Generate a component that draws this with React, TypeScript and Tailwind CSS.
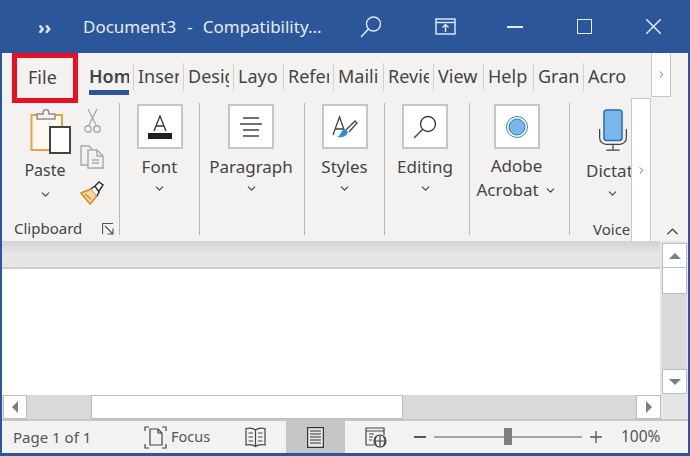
import { ChevronDown, ChevronRight, ChevronUp } from 'lucide-react'

const tabs = ['Inser', 'Desig', 'Layo', 'Refer', 'Maili', 'Revie', 'View', 'Help', 'Gran', 'Acro']

function Caret({ className = '' }: { className?: string }) {
  return <ChevronDown size={13} strokeWidth={2} className={`text-[#444] ${className}`} />
}

function IconBox({ children }: { children: React.ReactNode }) {
  return (
    <div className="flex h-[45px] w-[46px] items-center justify-center border-2 border-[#c6c6c6] bg-white">
      {children}
    </div>
  )
}

function BigGroup({ width, label, children }: { width: string; label: string; children: React.ReactNode }) {
  return (
    <div className={`flex h-[132px] flex-col items-center border-r border-[#b9b9b9] pt-px ${width}`}>
      <IconBox>{children}</IconBox>
      <div className="mt-[5px] text-[17px] leading-[25px]">{label}</div>
      <Caret className="mt-[3px]" />
    </div>
  )
}

function ScrollButton({ dir, className = '' }: { dir: 'up' | 'down' | 'left' | 'right'; className?: string }) {
  const points = { up: '0,9 6,3 12,9', down: '0,3 6,9 12,3', left: '9,0 3,6 9,12', right: '3,0 9,6 3,12' }[dir]
  return (
    <div className={`flex shrink-0 items-center justify-center border border-[#bdbdbd] bg-white ${className}`}>
      <svg width="12" height="12" viewBox="0 0 12 12">
        <polygon points={points} fill="#7d7d7d" />
      </svg>
    </div>
  )
}

export default function App() {
  return (
    <div className="relative flex h-[456px] w-[690px] flex-col overflow-hidden bg-[#2b579a] px-[2px] pb-[3px] font-['Noto_Sans',sans-serif] text-[#444]">
      {/* Title bar */}
      <div className="-mx-[2px] flex h-[53px] shrink-0 items-center text-[#e4ebf5]">
        <div className="ml-[38px] w-[45px] text-[18px] font-bold leading-none">››</div>
        <div className="w-[270px] whitespace-nowrap text-[17px]">
          Document3
          <span className="ml-[11px]">-</span>
          <span className="ml-[10px]">Compatibility...</span>
        </div>
        <svg className="ml-[7px]" width="22" height="24" viewBox="0 0 22 24" fill="none" stroke="currentColor" strokeWidth="1.4">
          <circle cx="13.5" cy="9" r="7" />
          <path d="M8.5 14 1 22" />
        </svg>
        <svg className="ml-[53px]" width="21" height="17" viewBox="0 0 21 17" fill="none" stroke="currentColor" strokeWidth="1.4">
          <rect x="1" y="1" width="19" height="15" />
          <path d="M1 4.5h19" />
          <path d="M10.5 14V7M7.5 9.5l3-3 3 3" />
        </svg>
        <div className="ml-[51px] h-[2px] w-[16px] bg-current" />
        <div className="ml-[54px] h-[15px] w-[15px] border-[1.5px] border-current" />
        <svg className="ml-[54px]" width="15" height="15" viewBox="0 0 15 15" stroke="currentColor" strokeWidth="1.5">
          <path d="M0 0l15 15M15 0 0 15" />
        </svg>
      </div>

      {/* Ribbon */}
      <div className="relative flex h-[188px] shrink-0 flex-col bg-[#f3f2f1]">
        <div className="flex h-[45px] shrink-0 items-center pl-[12px] pt-[3px] text-[18px]">
          <div className="w-[70px] pl-[14px]">File</div>
          <div className="h-[28px] w-[49px] pl-[5px] pr-[4px]">
            <div className="h-full overflow-hidden font-semibold leading-[27px]">Home</div>
          </div>
          {tabs.map((tab) => (
            <div key={tab} className="h-[28px] w-[50px] shrink-0 border-l border-[#d0d0d0] pl-[4px] pr-[4px]">
              <div className="h-full overflow-hidden whitespace-nowrap leading-[27px]">{tab}</div>
            </div>
          ))}
        </div>

        <div className="flex flex-1 items-start overflow-hidden pt-[5px] text-[#444]">
          {/* Clipboard */}
          <div className="relative flex h-[132px] w-[118px] shrink-0 flex-col border-r border-[#b9b9b9]">
            <div className="flex h-[104px] pt-[6px]">
              <div className="ml-[18px] flex w-[50px] flex-col items-center">
                <svg className="ml-[11px]" width="42" height="46" viewBox="0 0 42 46" fill="none">
                  <path d="M7 6H1.500v35H20V20h12V6h-6" fill="#fdf8f0" stroke="#e8a33d" strokeWidth="2" />
                  <path d="M7 10V5h6c0-6 6-6 6 0h6v5z" fill="#f3f2f1" stroke="#8c8c8c" strokeWidth="1.5" />
                  <rect x="20" y="18" width="20" height="26" fill="#fff" stroke="#444" strokeWidth="2" />
                </svg>
                <div className="mt-[3px] text-[16px] leading-[25px]">Paste</div>
                <Caret className="mt-[5px]" />
              </div>
              <div className="ml-[10px] flex flex-col items-center gap-[12px]">
                <svg width="17" height="24" viewBox="0 0 17 24" fill="none" stroke="#a9a9a9" strokeWidth="1.4">
                  <path d="M4 0l8 16M13 0 5 16" />
                  <circle cx="4" cy="20" r="3.2" />
                  <circle cx="13" cy="20" r="3.2" />
                </svg>
                <svg width="25" height="24" viewBox="0 0 25 24" fill="none" stroke="#a9a9a9" strokeWidth="1.4">
                  <path d="M8 20H1V1h8l3 3" />
                  <path d="M8 5h9l6 6v12H8zM17 5v6h6M12 15h7M12 18h7" fill="#f3f2f1" />
                </svg>
                <svg width="25" height="24" viewBox="0 0 25 24" fill="none">
                  <path d="M1 12 11 8l6 7-7 8z" fill="#f6d8aa" stroke="#dd8a1e" strokeWidth="1.6" />
                  <path d="M5 13l6 5" stroke="#dd8a1e" strokeWidth="1.5" />
                  <path d="M11 8l4-3 4 6-2 4M15 5l4-4 4 3-4 6" stroke="#333" strokeWidth="1.5" fill="#fff" />
                </svg>
              </div>
            </div>
            <div className="ml-[12px] mt-[13px] text-[15px] leading-[20px]">Clipboard</div>
            <svg className="absolute bottom-0 right-[5px]" width="12" height="12" viewBox="0 0 12 12" fill="none" stroke="#555" strokeWidth="1.2">
              <path d="M.5 11V.5H11M3 3l8 8M11 5.5V11H5.5" />
            </svg>
          </div>

          <BigGroup width="w-[80px] shrink-0" label="Font">
            <div className="flex flex-col items-center">
              <svg width="14" height="17" viewBox="0 0 14 17" fill="none" stroke="#333" strokeWidth="1.3">
                <path d="M1 16 7 1l6 15M3.500 11h7" />
              </svg>
              <div className="mt-[1px] h-[6px] w-[24px] bg-[#222]" />
            </div>
          </BigGroup>

          <BigGroup width="w-[105px] shrink-0 pr-[2px]" label="Paragraph">
            <svg width="24" height="20" viewBox="0 0 24 20" stroke="#444" strokeWidth="1.4">
              <path d="M4 1h16M1 7h22M4 13h16M4 19h16" />
            </svg>
          </BigGroup>

          <BigGroup width="w-[80px] shrink-0" label="Styles">
            <svg width="26" height="24" viewBox="0 0 26 24" fill="none">
              <path d="M1 20 7.500 2 14 20M3.500 14h8" stroke="#444" strokeWidth="1.3" />
              <path d="M14 15 23 6l2 2-8 9" stroke="#444" strokeWidth="1.3" />
              <path d="M5 22c4 1 9 0 11-5l-3-3c-2 0-3 2-4 4-1 2-2 3-4 4z" fill="#2e8bd8" />
            </svg>
          </BigGroup>

          <BigGroup width="w-[85px] shrink-0 pr-[4px]" label="Editing">
            <svg width="24" height="24" viewBox="0 0 24 24" fill="none" stroke="#444" strokeWidth="1.4">
              <circle cx="15" cy="9" r="7.500" />
              <path d="M9.500 14.500 1 23" />
            </svg>
          </BigGroup>

          {/* Adobe Acrobat */}
          <div className="flex h-[132px] w-[100px] shrink-0 flex-col items-center border-r border-[#b9b9b9] pr-[6px] pt-px">
            <IconBox>
              <svg width="24" height="24" viewBox="0 0 24 24" fill="none">
                <circle cx="12" cy="12" r="10.500" stroke="#2e8bd8" strokeWidth="1" />
                <circle cx="12" cy="12" r="8" fill="#7ab6ea" stroke="#2e7fc4" strokeWidth="1" />
              </svg>
            </IconBox>
            <div className="mt-[5px] text-[17px] leading-[24px]">Adobe</div>
            <div className="flex items-center gap-[5px] text-[17px] leading-[24px]">
              Acrobat
              <Caret />
            </div>
          </div>

          {/* Voice */}
          <div className="h-[132px] w-[61px] shrink-0 overflow-hidden pt-[6px]">
            <svg className="ml-[28px]" width="30" height="42" viewBox="0 0 30 44" fill="none">
              <rect x="5.500" y="1" width="19" height="32" rx="3" fill="#7ab6ea" stroke="#1f6fb2" strokeWidth="1.500" />
              <path d="M1 21v9c0 4 3 7 7 7h14c4 0 7-3 7-7v-9M15 37v6M8 43h14" stroke="#444" strokeWidth="1.300" />
            </svg>
            <div className="ml-[16px] mt-[7px] whitespace-nowrap text-[17px] leading-[25px]">Dictate</div>
            <Caret className="ml-[36px] mt-[4px]" />
            <div className="ml-[23px] mt-[19px] text-[15px] leading-[20px]">Voice</div>
          </div>
        </div>

        {/* overflow arrows and collapse */}
        <div className="absolute bottom-0 left-[629px] top-[45px] flex w-[20px] items-center justify-center border-x border-t border-[#c6c6c6] bg-white">
          <ChevronRight size={11} className="text-[#666]" />
        </div>
        <div className="absolute left-[649px] top-0 flex h-[44px] w-[20px] items-center justify-center border border-t-0 border-[#c6c6c6] bg-white">
          <ChevronRight size={11} className="text-[#666]" />
        </div>
        <ChevronUp size={19} strokeWidth={1.600} className="absolute bottom-0 right-[6px] text-[#333]" />
      </div>

      {/* Document area */}
      <div className="flex min-h-0 flex-1 flex-col bg-[#e6e6e6]">
        <div className="flex min-h-0 flex-1">
          <div className="flex min-w-0 flex-1 flex-col">
            <div className="h-[26px] shrink-0 bg-gradient-to-b from-[#d2d2d2] via-[#e6e6e6] to-[#e6e6e6]" />
            <div className="flex-1 border-t-2 border-[#cfcfcf] bg-white" />
          </div>
          <div className="flex w-[28px] shrink-0 flex-col bg-[#e6e6e6] pb-px pl-[2px] pr-px pt-[2px]">
            <ScrollButton dir="up" className="h-[25px]" />
            <div className="h-[26px] shrink-0 border-x border-b border-[#bdbdbd] bg-white" />
            <div className="flex-1 bg-[#d9d9d9]" />
            <ScrollButton dir="down" className="h-[25px]" />
          </div>
        </div>
        <div className="flex h-[26px] shrink-0 items-stretch border-b-2 border-[#c6c6c6] pl-px pr-[27px]">
          <ScrollButton dir="left" className="w-[24px]" />
          <div className="w-[64px] shrink-0 bg-[#d9d9d9]" />
          <div className="w-[312px] shrink-0 border border-[#bdbdbd] bg-white" />
          <div className="flex-1 bg-[#d9d9d9]" />
          <ScrollButton dir="right" className="w-[25px]" />
        </div>
      </div>

      {/* Status bar */}
      <div className="flex h-[32px] shrink-0 items-center bg-[#f3f2f1] text-[15px] text-[#555]">
        <div className="ml-[11px] w-[131px]">Page 1 of 1</div>
        <svg width="23" height="23" viewBox="0 0 23 23" fill="none" stroke="#444" strokeWidth="1.2">
          <path d="M1 5V1h4M18 1h4v4M1 18v4h4M18 22h4v-4" />
          <path d="M6 3h8l4 4v12H6zM14 3v4h4" />
        </svg>
        <div className="ml-[4px] w-[39px] text-[14.500px]">Focus</div>
        <svg className="ml-[35px]" width="21" height="21" viewBox="0 0 21 21" fill="none" stroke="#444" strokeWidth="1.2">
          <path d="M10.500 3C8 1 4 1 1 1.500V18c3-.5 7-.5 9.500 1.500 2.500-2 6.500-2 9.500-1.500V1.500C17 1 13 1 10.500 3zM10.500 3v16" />
          <path d="M3.500 6h4.500M3.500 10h4.500M3.500 14h4.500M13 6h4.500M13 10h4.500M13 14h4.500" />
        </svg>
        <div className="ml-[20px] flex h-full w-[59px] items-center justify-center bg-[#c6c6c6]">
          <svg width="17" height="21" viewBox="0 0 17 21" fill="none" stroke="#333" strokeWidth="1.2">
            <rect x=".6" y=".6" width="15.800" height="19.800" fill="#e8e8e8" />
            <path d="M3 4h11M3 7h11M3 10h11M3 13h11M3 16h11" />
          </svg>
        </div>
        <svg className="ml-[20px]" width="23" height="21" viewBox="0 0 23 21" fill="none" stroke="#444" strokeWidth="1.2">
          <path d="M9 18H1V1h18v7M1 4h18M4 7h5M4 10h4M4 13h3" />
          <circle cx="15" cy="14" r="6" fill="#f3f2f1" />
          <path d="M9 14h12M15 8v12M11.500 9.500c-2 3-2 6 0 9M18.500 9.500c2 3 2 6 0 9" />
        </svg>
        <div className="ml-[26px] h-[1.500px] w-[12px] bg-[#555]" />
        <div className="relative ml-[8px] h-[2px] w-[148px] bg-[#a6a6a6]">
          <div className="absolute left-[70px] top-[-8px] h-[17px] w-[8px] bg-[#7f7f7f]" />
        </div>
        <svg className="ml-[8px]" width="12" height="12" viewBox="0 0 12 12" stroke="#555" strokeWidth="1.300">
          <path d="M0 6h12M6 0v12" />
        </svg>
        <div className="ml-[19px] text-[15.500px]">100%</div>
      </div>

      {/* Red highlight round the File tab */}
      <div className="absolute left-[12px] top-[53px] h-[50px] w-[66px] border-[5px] border-[#e81123]" />
      {/* Home tab underline */}
      <div className="absolute left-[89px] top-[90px] h-[5px] w-[40px] bg-[#2b579a]" />
    </div>
  )
}
